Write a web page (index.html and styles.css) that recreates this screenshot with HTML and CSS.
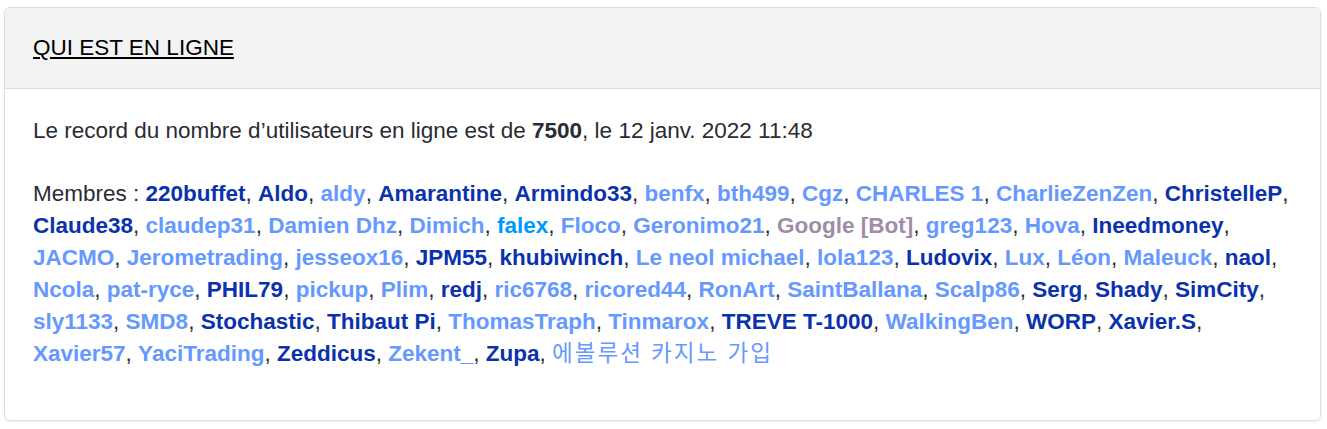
FILE: index.html
```html
<!DOCTYPE html>
<html lang="fr">
<head>
    <meta charset="UTF-8">
    <meta name="viewport" content="width=device-width, initial-scale=1.0">
    <title>Qui est en ligne</title>
    <link rel="stylesheet" href="styles.css">
</head>
<body>

<div class="panel">
    <div class="panel-head">
        <h3><a href="#">QUI EST EN LIGNE</a></h3>
    </div>
    <div class="panel-body">
        <p>Le record du nombre d’utilisateurs en ligne est de <strong>7500</strong>, le 12 janv. 2022 11:48</p>
        <p class="members">Membres :
            <a class="u-dark" href="#">220buffet</a>,
            <a class="u-dark" href="#">Aldo</a>,
            <a class="u-light" href="#">aldy</a>,
            <a class="u-dark" href="#">Amarantine</a>,
            <a class="u-dark" href="#">Armindo33</a>,
            <a class="u-light" href="#">benfx</a>,
            <a class="u-light" href="#">bth499</a>,
            <a class="u-light" href="#">Cgz</a>,
            <a class="u-light" href="#">CHARLES 1</a>,
            <a class="u-light" href="#">CharlieZenZen</a>,
            <a class="u-dark" href="#">ChristelleP</a>,
            <a class="u-dark" href="#">Claude38</a>,
            <a class="u-light" href="#">claudep31</a>,
            <a class="u-light" href="#">Damien Dhz</a>,
            <a class="u-light" href="#">Dimich</a>,
            <a class="u-mod" href="#">falex</a>,
            <a class="u-light" href="#">Floco</a>,
            <a class="u-light" href="#">Geronimo21</a>,
            <span class="u-bot">Google [Bot]</span>,
            <a class="u-light" href="#">greg123</a>,
            <a class="u-light" href="#">Hova</a>,
            <a class="u-dark" href="#">Ineedmoney</a>,
            <a class="u-light" href="#">JACMO</a>,
            <a class="u-light" href="#">Jerometrading</a>,
            <a class="u-light" href="#">jesseox16</a>,
            <a class="u-dark" href="#">JPM55</a>,
            <a class="u-dark" href="#">khubiwinch</a>,
            <a class="u-light" href="#">Le neol michael</a>,
            <a class="u-light" href="#">lola123</a>,
            <a class="u-dark" href="#">Ludovix</a>,
            <a class="u-light" href="#">Lux</a>,
            <a class="u-light" href="#">Léon</a>,
            <a class="u-light" href="#">Maleuck</a>,
            <a class="u-dark" href="#">naol</a>,
            <a class="u-light" href="#">Ncola</a>,
            <a class="u-light" href="#">pat-ryce</a>,
            <a class="u-dark" href="#">PHIL79</a>,
            <a class="u-light" href="#">pickup</a>,
            <a class="u-light" href="#">Plim</a>,
            <a class="u-dark" href="#">redj</a>,
            <a class="u-light" href="#">ric6768</a>,
            <a class="u-light" href="#">ricored44</a>,
            <a class="u-light" href="#">RonArt</a>,
            <a class="u-light" href="#">SaintBallana</a>,
            <a class="u-light" href="#">Scalp86</a>,
            <a class="u-dark" href="#">Serg</a>,
            <a class="u-dark" href="#">Shady</a>,
            <a class="u-dark" href="#">SimCity</a>,
            <a class="u-light" href="#">sly1133</a>,
            <a class="u-light" href="#">SMD8</a>,
            <a class="u-dark" href="#">Stochastic</a>,
            <a class="u-dark" href="#">Thibaut Pi</a>,
            <a class="u-light" href="#">ThomasTraph</a>,
            <a class="u-light" href="#">Tinmarox</a>,
            <a class="u-dark" href="#">TREVE T-1000</a>,
            <a class="u-light" href="#">WalkingBen</a>,
            <a class="u-dark" href="#">WORP</a>,
            <a class="u-dark" href="#">Xavier.S</a>,
            <a class="u-light" href="#">Xavier57</a>,
            <a class="u-light" href="#">YaciTrading</a>,
            <a class="u-dark" href="#">Zeddicus</a>,
            <a class="u-light" href="#">Zekent_</a>,
            <a class="u-dark" href="#">Zupa</a>,
            <a class="u-light u-kr" href="#">에볼루션 카지노 가입</a>
        </p>
    </div>
</div>

</body>
</html>
```

FILE: styles.css
```css
body {
    margin: 0;
    padding: 7px 6px 8px 4px;
    font-family: "Liberation Sans", Arial, "Noto Sans CJK KR", sans-serif;
    background-color: #fff;
    color: #2b2b33;
}
.panel {
    border: 1px solid #ddd;
    border-radius: 6px;
    box-shadow: 0 1px 2px rgba(0, 0, 0, 0.08);
    overflow: hidden;
}
.panel-head {
    background-color: #f3f3f3;
    border-bottom: 1px solid #ddd;
    padding: 24px 28px;
}
.panel-head h3 {
    margin: 0;
    font-size: 22.5px;
    font-weight: normal;
    line-height: 32px;
}
.panel-head a {
    color: #000;
    text-decoration: underline;
}
.panel-body {
    padding: 26px 28px 50px 28px;
    font-size: 22.5px;
    line-height: 32px;
}
.panel-body p {
    margin: 0 0 31px 0;
}
.panel-body p.members {
    margin: 0;
}
.panel-body strong {
    font-weight: bold;
}
.members a,
.members span {
    font-weight: bold;
    text-decoration: none;
}
.members .u-kr {
    font-weight: normal;
    letter-spacing: 2px;
}
.u-dark {
    color: #0a32ad;
}
.u-light {
    color: #6699ff;
}
.u-mod {
    color: #0099ff;
}
.u-bot {
    color: #9e8da7;
}
```
